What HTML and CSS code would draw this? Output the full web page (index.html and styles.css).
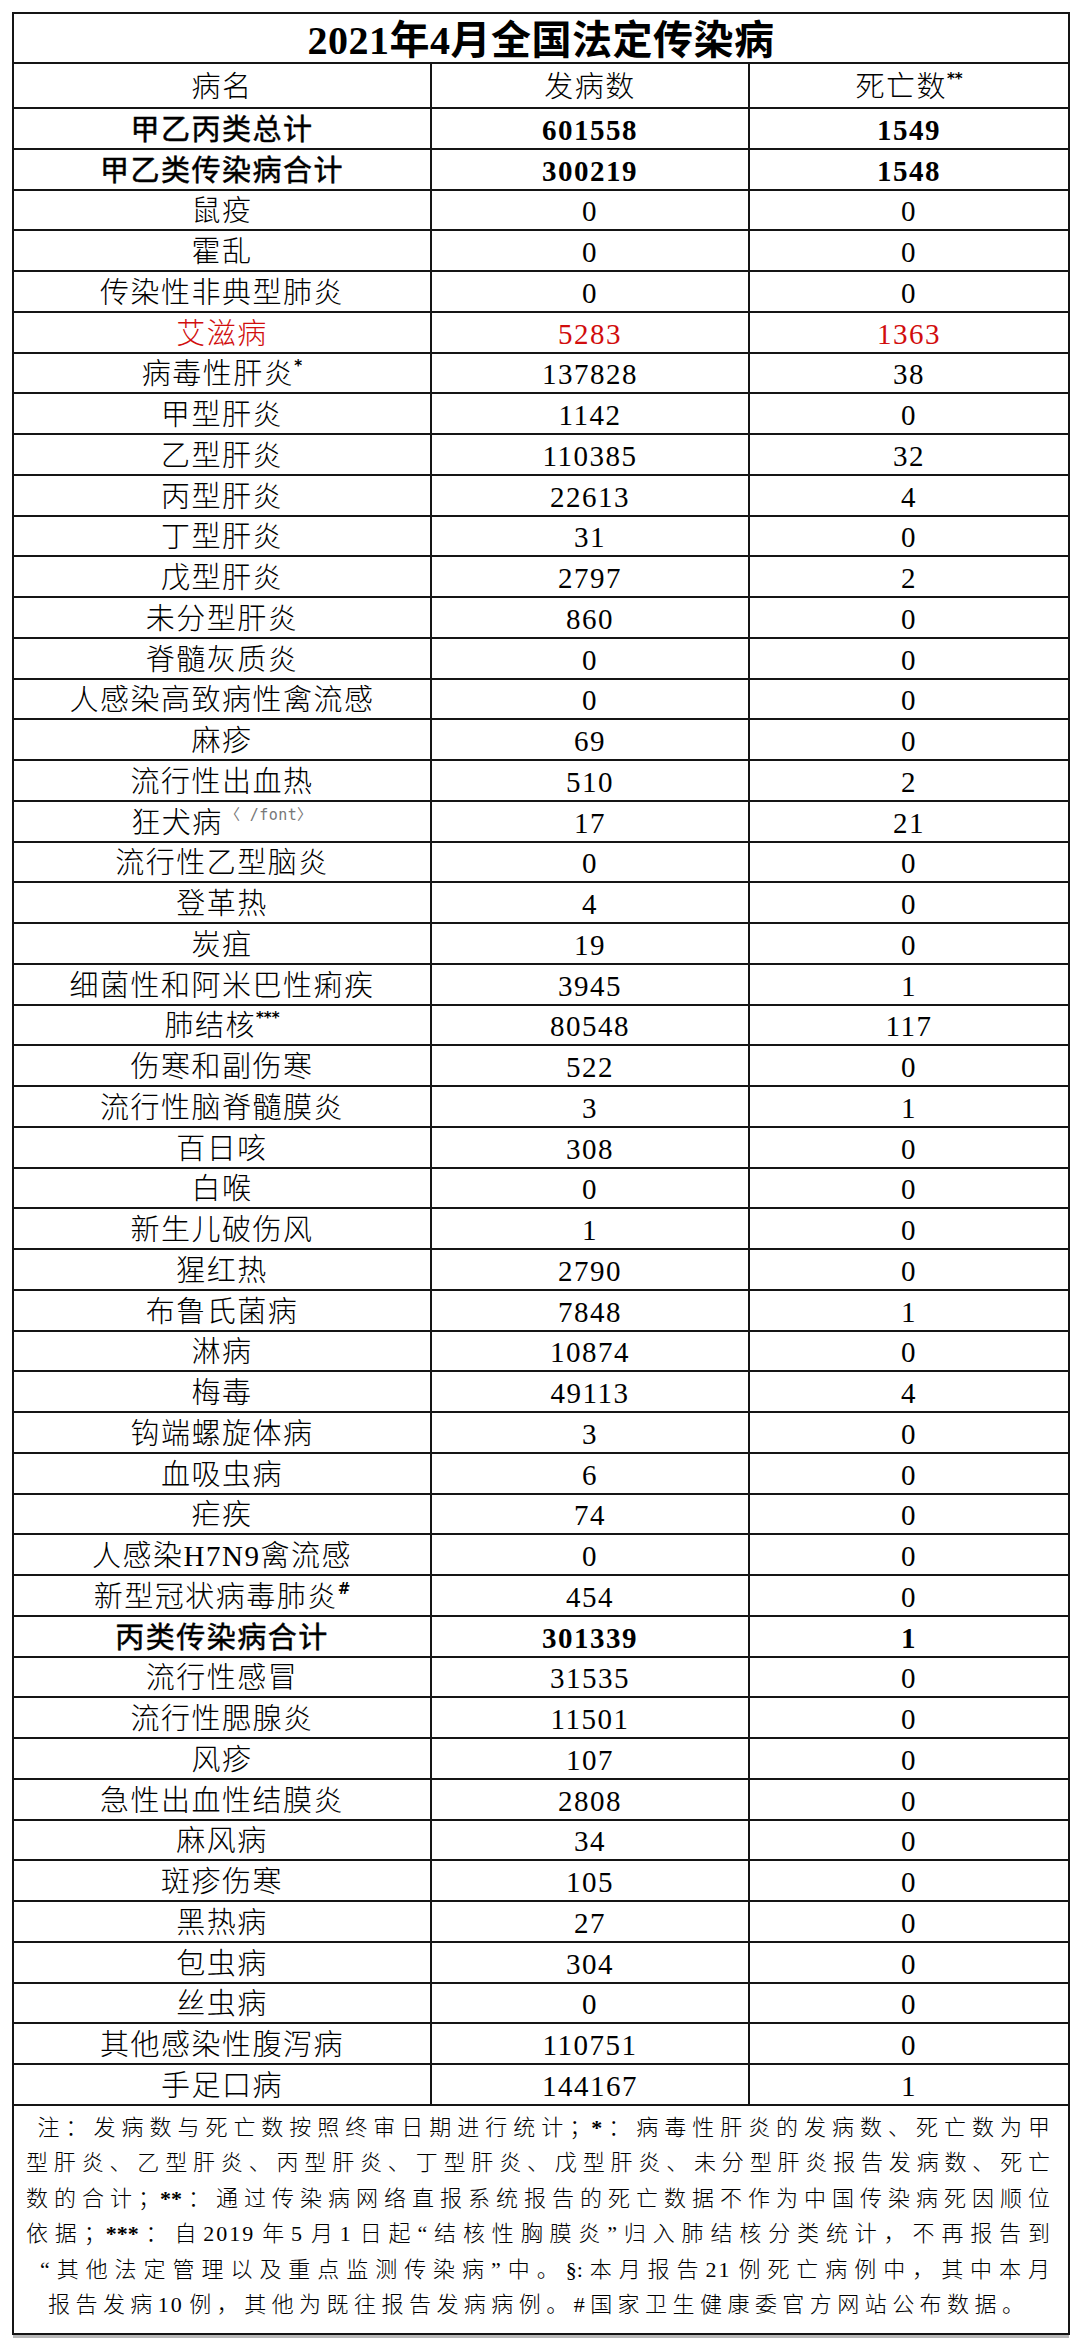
FILE: index.html
```html
<!DOCTYPE html>
<html lang="zh-CN">
<head>
<meta charset="utf-8">
<title>2021年4月全国法定传染病</title>
<link rel="stylesheet" href="styles.css">
</head>
<body>
<table class="sheet">
  <colgroup><col class="c1"><col class="c2"><col class="c3"></colgroup>
  <tbody>
    <tr class="title"><td colspan="3">2021年4月全国法定传染病</td></tr>
    <tr class="head"><td>病名</td><td>发病数</td><td>死亡数<sup class="mark">**</sup></td></tr>
    <tr class="r bold"><td>甲乙丙类总计</td><td>601558</td><td>1549</td></tr>
    <tr class="r bold"><td>甲乙类传染病合计</td><td>300219</td><td>1548</td></tr>
    <tr class="r"><td>鼠疫</td><td>0</td><td>0</td></tr>
    <tr class="r"><td>霍乱</td><td>0</td><td>0</td></tr>
    <tr class="r"><td>传染性非典型肺炎</td><td>0</td><td>0</td></tr>
    <tr class="r red"><td>艾滋病</td><td>5283</td><td>1363</td></tr>
    <tr class="r"><td>病毒性肝炎<sup class="mark">*</sup></td><td>137828</td><td>38</td></tr>
    <tr class="r"><td>甲型肝炎</td><td>1142</td><td>0</td></tr>
    <tr class="r"><td>乙型肝炎</td><td>110385</td><td>32</td></tr>
    <tr class="r"><td>丙型肝炎</td><td>22613</td><td>4</td></tr>
    <tr class="r"><td>丁型肝炎</td><td>31</td><td>0</td></tr>
    <tr class="r"><td>戊型肝炎</td><td>2797</td><td>2</td></tr>
    <tr class="r"><td>未分型肝炎</td><td>860</td><td>0</td></tr>
    <tr class="r"><td>脊髓灰质炎</td><td>0</td><td>0</td></tr>
    <tr class="r"><td>人感染高致病性禽流感</td><td>0</td><td>0</td></tr>
    <tr class="r"><td>麻疹</td><td>69</td><td>0</td></tr>
    <tr class="r"><td>流行性出血热</td><td>510</td><td>2</td></tr>
    <tr class="r"><td>狂犬病<sup class="tag">〈 /font〉</sup></td><td>17</td><td>21</td></tr>
    <tr class="r"><td>流行性乙型脑炎</td><td>0</td><td>0</td></tr>
    <tr class="r"><td>登革热</td><td>4</td><td>0</td></tr>
    <tr class="r"><td>炭疽</td><td>19</td><td>0</td></tr>
    <tr class="r"><td>细菌性和阿米巴性痢疾</td><td>3945</td><td>1</td></tr>
    <tr class="r"><td>肺结核<sup class="mark">***</sup></td><td>80548</td><td>117</td></tr>
    <tr class="r"><td>伤寒和副伤寒</td><td>522</td><td>0</td></tr>
    <tr class="r"><td>流行性脑脊髓膜炎</td><td>3</td><td>1</td></tr>
    <tr class="r"><td>百日咳</td><td>308</td><td>0</td></tr>
    <tr class="r"><td>白喉</td><td>0</td><td>0</td></tr>
    <tr class="r"><td>新生儿破伤风</td><td>1</td><td>0</td></tr>
    <tr class="r"><td>猩红热</td><td>2790</td><td>0</td></tr>
    <tr class="r"><td>布鲁氏菌病</td><td>7848</td><td>1</td></tr>
    <tr class="r"><td>淋病</td><td>10874</td><td>0</td></tr>
    <tr class="r"><td>梅毒</td><td>49113</td><td>4</td></tr>
    <tr class="r"><td>钩端螺旋体病</td><td>3</td><td>0</td></tr>
    <tr class="r"><td>血吸虫病</td><td>6</td><td>0</td></tr>
    <tr class="r"><td>疟疾</td><td>74</td><td>0</td></tr>
    <tr class="r"><td>人感染H7N9禽流感</td><td>0</td><td>0</td></tr>
    <tr class="r"><td>新型冠状病毒肺炎<sup class="mark">#</sup></td><td>454</td><td>0</td></tr>
    <tr class="r bold"><td>丙类传染病合计</td><td>301339</td><td>1</td></tr>
    <tr class="r"><td>流行性感冒</td><td>31535</td><td>0</td></tr>
    <tr class="r"><td>流行性腮腺炎</td><td>11501</td><td>0</td></tr>
    <tr class="r"><td>风疹</td><td>107</td><td>0</td></tr>
    <tr class="r"><td>急性出血性结膜炎</td><td>2808</td><td>0</td></tr>
    <tr class="r"><td>麻风病</td><td>34</td><td>0</td></tr>
    <tr class="r"><td>斑疹伤寒</td><td>105</td><td>0</td></tr>
    <tr class="r"><td>黑热病</td><td>27</td><td>0</td></tr>
    <tr class="r"><td>包虫病</td><td>304</td><td>0</td></tr>
    <tr class="r"><td>丝虫病</td><td>0</td><td>0</td></tr>
    <tr class="r"><td>其他感染性腹泻病</td><td>110751</td><td>0</td></tr>
    <tr class="r"><td>手足口病</td><td>144167</td><td>1</td></tr>
    <tr class="notes">
      <td colspan="3">
        <div class="ln first">&nbsp;注：发病数与死亡数按照终审日期进行统计；<b>*</b>：病毒性肝炎的发病数、死亡数为甲</div>
        <div class="ln">型肝炎、乙型肝炎、丙型肝炎、丁型肝炎、戊型肝炎、未分型肝炎报告发病数、死亡</div>
        <div class="ln">数的合计；<b>**</b>：通过传染病网络直报系统报告的死亡数据不作为中国传染病死因顺位</div>
        <div class="ln">依据；<b>***</b>：自<span class="num">2019</span>年<span class="num">5</span>月<span class="num">1</span>日起“结核性胸膜炎”归入肺结核分类统计，不再报告到</div>
        <div class="ln fifth">“其他法定管理以及重点监测传染病”中。§:本月报告<span class="num">21</span>例死亡病例中，其中本月</div>
        <div class="ln sixth">报告发病<span class="num">10</span>例，其他为既往报告发病病例。#国家卫生健康委官方网站公布数据。</div>
      </td>
    </tr>
  </tbody>
</table>
</body>
</html>
```

FILE: styles.css
```css
html, body {
  margin: 0;
  padding: 0;
  background: #ffffff;
}

body {
  padding: 12px;
  font-family: "Liberation Serif", "Noto Sans CJK SC", serif;
  color: #000;
}

.sheet {
  border-collapse: collapse;
  table-layout: fixed;
  width: 1056px;
  box-shadow: 0 4px 0 -1px #b8b8b8;
}

.c1 { width: 418px; }
.c2 { width: 318px; }
.c3 { width: 320px; }

.sheet td {
  border: 2px solid #151515;
  padding: 0;
  text-align: center;
  vertical-align: middle;
}

.title td {
  height: 50px;
  font-size: 40px;
  line-height: 42px;
  font-weight: 700;
  letter-spacing: 0.5px;
  padding-top: 5px;
  box-sizing: border-box;
}

.head td,
.r td {
  font-size: 29px;
  letter-spacing: 1.5px;
  font-weight: 300;
  padding-top: 3px;
  box-sizing: border-box;
}

.head td { height: 45px; line-height: 34px; }
.r td { height: 40.76px; line-height: 34px; }

.bold td { font-weight: 700; }
.bold td:first-child { font-weight: 400; -webkit-text-stroke: 0.5px #000; }

.red td { color: #d10d0d; }

.mark {
  font-family: "DejaVu Sans", sans-serif;
  font-size: 15px;
  font-weight: 700;
  letter-spacing: 0;
  vertical-align: 13px;
  line-height: 0;
}

.tag {
  font-family: "DejaVu Sans Mono", "Liberation Mono", monospace;
  font-size: 15px;
  color: #777;
  letter-spacing: 0.5px;
  vertical-align: 13px;
  line-height: 0;
  margin-left: 2px;
}

.notes td {
  height: 229px;
  padding: 4px 18px 10px 12px;
  box-sizing: border-box;
  font-size: 22px;
  font-weight: 300;
  line-height: 35.5px;
  letter-spacing: 0;
}

.ln {
  text-align: justify;
  text-align-last: justify;
  white-space: nowrap;
}

.ln b { font-weight: 700; }
.ln .num { letter-spacing: 2px; }

.ln.fifth { padding-left: 14px; }
.ln.sixth { padding-left: 22px; padding-right: 26px; }
```
